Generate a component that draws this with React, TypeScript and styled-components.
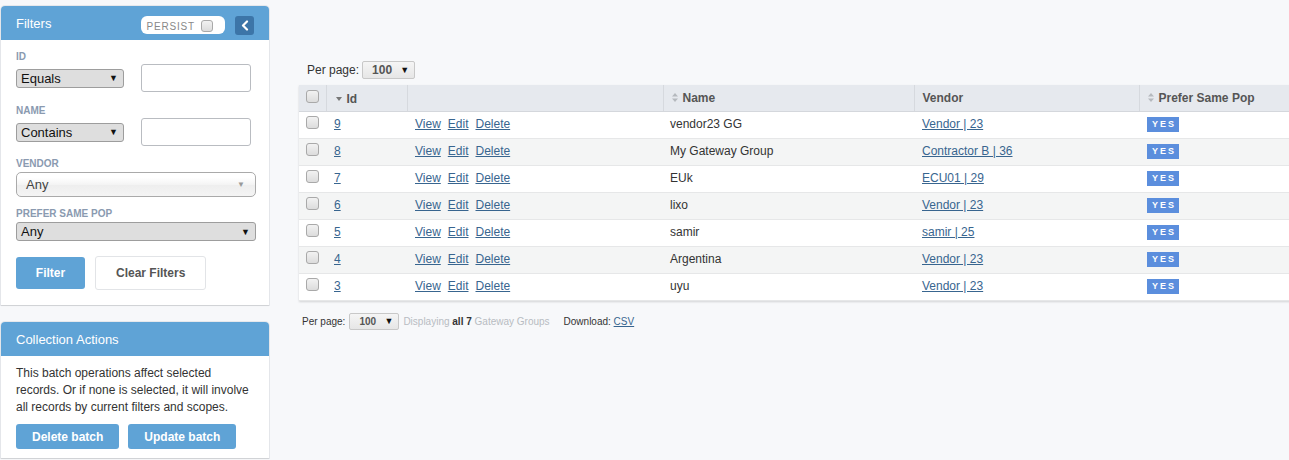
import React from "react";
import styled, { createGlobalStyle } from "styled-components";

const blue = "#5fa3d6";
const link = "#38658f";

const GlobalStyle = createGlobalStyle`
    html, body {
        margin: 0;
        padding: 0;
        background: #f7f8fa;
        overflow: hidden;
    }
    body {
        font-family: "Liberation Sans", Arial, sans-serif;
        font-size: 12px;
        color: #333;
    }
`;

const Page = styled.div`
    display: flex;
    align-items: flex-start;
    min-height: 460px;
`;

const Sidebar = styled.aside`
    flex: 0 0 268px;
    padding: 6px 0 0 1px;
    margin-right: 1px;
    display: flex;
    flex-direction: column;
    gap: 17px;
`;

const Panel = styled.section`
    background: #fff;
    border-radius: 4px 4px 0 0;
    box-shadow: 0 1px 1px rgba(0, 0, 0, 0.1), 0 0 0 1px #e6e8ec;
`;

const PanelHeader = styled.header`
    height: 34px;
    background: ${blue};
    border-radius: 4px 4px 0 0;
    color: #fff;
    font-size: 13px;
    display: flex;
    align-items: center;
    padding: 0 15px 0 15px;
`;

const HeaderTitle = styled.h3`
    margin: 0;
    font-size: 13px;
    font-weight: normal;
    flex: 1;
`;

const Persist = styled.label`
    width: 84px;
    height: 18px;
    box-sizing: border-box;
    background: #fff;
    border-radius: 6px;
    display: flex;
    align-items: center;
    justify-content: flex-end;
    gap: 6px;
    padding: 2px 12px 0 0;
    color: #888;
    font-size: 10px;
    letter-spacing: 0.8px;
    margin-right: 10px;
    margin-top: 4px;
`;

const CheckBox = styled.span<{ small?: boolean }>`
    display: inline-block;
    width: ${p => (p.small ? 10 : 11)}px;
    height: ${p => (p.small ? 10 : 11)}px;
    border: 1px solid #a9a9a9;
    border-radius: 3px;
    background: linear-gradient(#f2f2f2, #dcdcdc);
    box-sizing: content-box;
`;

const Collapse = styled.button`
    width: 19px;
    height: 19px;
    border: 0;
    border-radius: 3px;
    background: #3c75a8;
    padding: 0;
    display: flex;
    align-items: center;
    justify-content: center;
    margin-top: 4px;
`;

const FilterBody = styled.div`
    padding: 11px 13px 15px 15px;
`;

const Group = styled.div<{ mb?: number }>`
    margin-bottom: ${p => (p.mb === undefined ? 0 : p.mb)}px;
`;

const Label = styled.div<{ gap?: number }>`
    font-size: 10px;
    line-height: 12px;
    font-weight: bold;
    color: #8a9ab0;
    text-transform: uppercase;
    margin-bottom: ${p => (p.gap === undefined ? 1 : p.gap)}px;
`;

const FieldRow = styled.div`
    display: flex;
    align-items: center;
    gap: 17px;
`;

const NativeSelect = styled.div<{ width?: number }>`
    box-sizing: border-box;
    width: ${p => (p.width ? `${p.width}px` : "100%")};
    height: 19px;
    background: #dedede;
    border: 1px solid #9d9d9d;
    border-radius: 3px;
    display: flex;
    align-items: center;
    justify-content: space-between;
    padding: 0 5px 0 4px;
    font-size: 13px;
    color: #111;
`;

const Arrow = styled.span<{ muted?: boolean }>`
    font-size: ${p => (p.muted ? 8 : 9)}px;
    color: ${p => (p.muted ? "#999" : "#111")};
`;

const TextInput = styled.input`
    box-sizing: border-box;
    width: 110px;
    height: 28px;
    border: 1px solid #b9bcc1;
    border-radius: 3px;
    background: #fff;
    margin: 0;
`;

const ChosenSelect = styled.div`
    box-sizing: border-box;
    height: 25px;
    width: 240px;
    border: 1px solid #aaa;
    border-radius: 5px;
    background: linear-gradient(#fff 20%, #f4f4f4 50%, #eee 52%, #f4f4f4 100%);
    display: flex;
    align-items: center;
    justify-content: space-between;
    padding: 0 10px 0 9px;
    font-size: 13px;
    color: #444;
`;

const Buttons = styled.div<{ mt?: number; gap?: number }>`
    display: flex;
    align-items: center;
    gap: ${p => (p.gap === undefined ? 10 : p.gap)}px;
    margin-top: ${p => p.mt || 0}px;
`;

const Button = styled.button<{ h?: number; w?: number }>`
    height: ${p => p.h || 32}px;
    ${p => p.w && `width: ${p.w}px;`}
    padding: 0 16px;
    border: 0;
    border-radius: 3px;
    background: ${blue};
    color: #fff;
    font-family: inherit;
    font-size: 12px;
    font-weight: bold;
`;

const GhostButton = styled(Button)`
    height: 34px;
    background: #fff;
    border: 1px solid #e2e4e7;
    color: #555;
    padding: 0 20px;
`;

const ActionsBody = styled.div`
    padding: 9px 14px 9px 15px;
`;

const Text = styled.p`
    margin: 0;
    font-size: 12px;
    line-height: 17px;
    color: #333;
`;

const Main = styled.main`
    flex: 0 0 auto;
    padding: 61px 0 0 29px;
`;

const PerPageBar = styled.div<{ small?: boolean; indent?: number }>`
    display: flex;
    align-items: center;
    gap: ${p => (p.small ? 4 : 3)}px;
    padding-left: ${p => p.indent || 0}px;
    font-size: ${p => (p.small ? 10 : 12)}px;
    color: #333;
`;

const PageSelect = styled.div<{ w: number; h: number }>`
    box-sizing: border-box;
    width: ${p => p.w}px;
    height: ${p => p.h}px;
    border: 1px solid #c8c8c8;
    border-radius: 2px;
    background: linear-gradient(#f5f5f5, #e6e6e6);
    display: flex;
    align-items: center;
    justify-content: space-between;
    padding: 0 5px 0 9px;
    font-weight: bold;
    color: #555;
`;

const TableWrap = styled.div`
    margin-top: 6px;
    width: 1010px;
    background: #fff;
    box-shadow: 0 1px 2px rgba(0, 0, 0, 0.15);
`;

const Table = styled.table`
    border-collapse: collapse;
    table-layout: fixed;
    width: 1010px;
`;

const Th = styled.th<{ w: number; pl?: number }>`
    width: ${p => p.w}px;
    height: 26px;
    box-sizing: border-box;
    padding: 0 0 0 ${p => (p.pl === undefined ? 8 : p.pl)}px;
    background: #e6e9ee;
    border-bottom: 1px solid #d4d7dc;
    border-left: 1px solid #d6d9de;
    text-align: left;
    font-size: 12px;
    font-weight: bold;
    color: #555;
    &:first-child {
        border-left: 0;
    }
`;

const HeadInner = styled.span`
    display: inline-flex;
    align-items: center;
    gap: 5px;
`;

const Tr = styled.tr<{ odd?: boolean }>`
    background: ${p => (p.odd ? "#f4f5f5" : "#fff")};
`;

const Td = styled.td<{ pl?: number }>`
    height: 25px;
    padding: 0 0 1px ${p => (p.pl === undefined ? 8 : p.pl)}px;
    border-bottom: 1px solid #e6e7e8;
    font-size: 12px;
    color: #333;
    white-space: nowrap;
    overflow: hidden;
`;

const Link = styled.a`
    color: ${link};
    text-decoration: underline;
    margin-right: 7px;
    cursor: pointer;
`;

const Yes = styled.span`
    display: inline-block;
    width: 32px;
    height: 15px;
    line-height: 15px;
    background: #5b8edd;
    color: #fff;
    font-size: 9px;
    font-weight: bold;
    letter-spacing: 2px;
    text-align: center;
    text-indent: 2px;
    vertical-align: middle;
`;

const Footer = styled(PerPageBar)`
    margin-top: 12px;
`;

const Muted = styled.span`
    color: #b8bcc2;
`;

const Strong = styled.b`
    color: #333;
`;

const Download = styled.span`
    margin-left: 10px;
    color: #333;
`;

const SortDown = () => (
    <svg width="6" height="4" viewBox="0 0 6 4">
        <path d="M0 0h6L3 4z" fill="#777" />
    </svg>
);

const SortBoth = () => (
    <svg width="6" height="9" viewBox="0 0 6 9">
        <path d="M0 3.5h6L3 0z M0 5.5h6L3 9z" fill="#b5b9be" />
    </svg>
);

const ChevronLeft = () => (
    <svg width="8" height="11" viewBox="0 0 8 11">
        <path d="M6 1.5L2 5.5l4 4" stroke="#fff" strokeWidth="2.2" fill="none" strokeLinecap="round" strokeLinejoin="round" />
    </svg>
);

const rows = [
    { id: 9, name: "vendor23 GG", vendor: "Vendor | 23" },
    { id: 8, name: "My Gateway Group", vendor: "Contractor B | 36" },
    { id: 7, name: "EUk", vendor: "ECU01 | 29" },
    { id: 6, name: "lixo", vendor: "Vendor | 23" },
    { id: 5, name: "samir", vendor: "samir | 25" },
    { id: 4, name: "Argentina", vendor: "Vendor | 23" },
    { id: 3, name: "uyu", vendor: "Vendor | 23" },
];

export default function App() {
    return (
        <>
            <GlobalStyle />
            <Page>
                <Sidebar>
                    <Panel>
                        <PanelHeader>
                            <HeaderTitle>Filters</HeaderTitle>
                            <Persist>
                                PERSIST <CheckBox small />
                            </Persist>
                            <Collapse>
                                <ChevronLeft />
                            </Collapse>
                        </PanelHeader>
                        <FilterBody>
                            <Group mb={13}>
                                <Label>Id</Label>
                                <FieldRow>
                                    <NativeSelect width={108}>
                                        Equals <Arrow>▼</Arrow>
                                    </NativeSelect>
                                    <TextInput />
                                </FieldRow>
                            </Group>
                            <Group mb={12}>
                                <Label>Name</Label>
                                <FieldRow>
                                    <NativeSelect width={108}>
                                        Contains <Arrow>▼</Arrow>
                                    </NativeSelect>
                                    <TextInput />
                                </FieldRow>
                            </Group>
                            <Group mb={11}>
                                <Label gap={2}>Vendor</Label>
                                <ChosenSelect>
                                    Any <Arrow muted>▼</Arrow>
                                </ChosenSelect>
                            </Group>
                            <Group>
                                <Label gap={2}>Prefer same pop</Label>
                                <NativeSelect width={240}>
                                    Any <Arrow>▼</Arrow>
                                </NativeSelect>
                            </Group>
                            <Buttons mt={15}>
                                <Button w={69}>Filter</Button>
                                <GhostButton>Clear Filters</GhostButton>
                            </Buttons>
                        </FilterBody>
                    </Panel>
                    <Panel>
                        <PanelHeader>
                            <HeaderTitle>Collection Actions</HeaderTitle>
                        </PanelHeader>
                        <ActionsBody>
                            <Text>
                                This batch operations affect selected records. Or if none is selected, it will involve all records by current filters and scopes.
                            </Text>
                            <Buttons mt={8} gap={9}>
                                <Button h={25}>Delete batch</Button>
                                <Button h={25}>Update batch</Button>
                            </Buttons>
                        </ActionsBody>
                    </Panel>
                </Sidebar>
                <Main>
                    <PerPageBar indent={8}>
                        Per page:
                        <PageSelect w={53} h={18}>
                            100 <Arrow>▼</Arrow>
                        </PageSelect>
                    </PerPageBar>
                    <TableWrap>
                        <Table>
                            <thead>
                                <tr>
                                    <Th w={27} pl={7}>
                                        <CheckBox />
                                    </Th>
                                    <Th w={81} pl={9}>
                                        <HeadInner>
                                            <SortDown /> Id
                                        </HeadInner>
                                    </Th>
                                    <Th w={256} />
                                    <Th w={251}>
                                        <HeadInner>
                                            <SortBoth /> Name
                                        </HeadInner>
                                    </Th>
                                    <Th w={225}>Vendor</Th>
                                    <Th w={170}>
                                        <HeadInner>
                                            <SortBoth /> Prefer Same Pop
                                        </HeadInner>
                                    </Th>
                                </tr>
                            </thead>
                            <tbody>
                                {rows.map((r, i) => (
                                    <Tr key={r.id} odd={i % 2 === 1}>
                                        <Td pl={7}>
                                            <CheckBox />
                                        </Td>
                                        <Td>
                                            <Link>{r.id}</Link>
                                        </Td>
                                        <Td>
                                            <Link>View</Link>
                                            <Link>Edit</Link>
                                            <Link>Delete</Link>
                                        </Td>
                                        <Td pl={7}>{r.name}</Td>
                                        <Td>
                                            <Link>{r.vendor}</Link>
                                        </Td>
                                        <Td>
                                            <Yes>YES</Yes>
                                        </Td>
                                    </Tr>
                                ))}
                            </tbody>
                        </Table>
                    </TableWrap>
                    <Footer small indent={3}>
                        Per page:
                        <PageSelect w={50} h={17}>
                            100 <Arrow>▼</Arrow>
                        </PageSelect>
                        <Muted>
                            Displaying <Strong>all 7</Strong> Gateway Groups
                        </Muted>
                        <Download>
                            Download: <Link>CSV</Link>
                        </Download>
                    </Footer>
                </Main>
            </Page>
        </>
    );
}
